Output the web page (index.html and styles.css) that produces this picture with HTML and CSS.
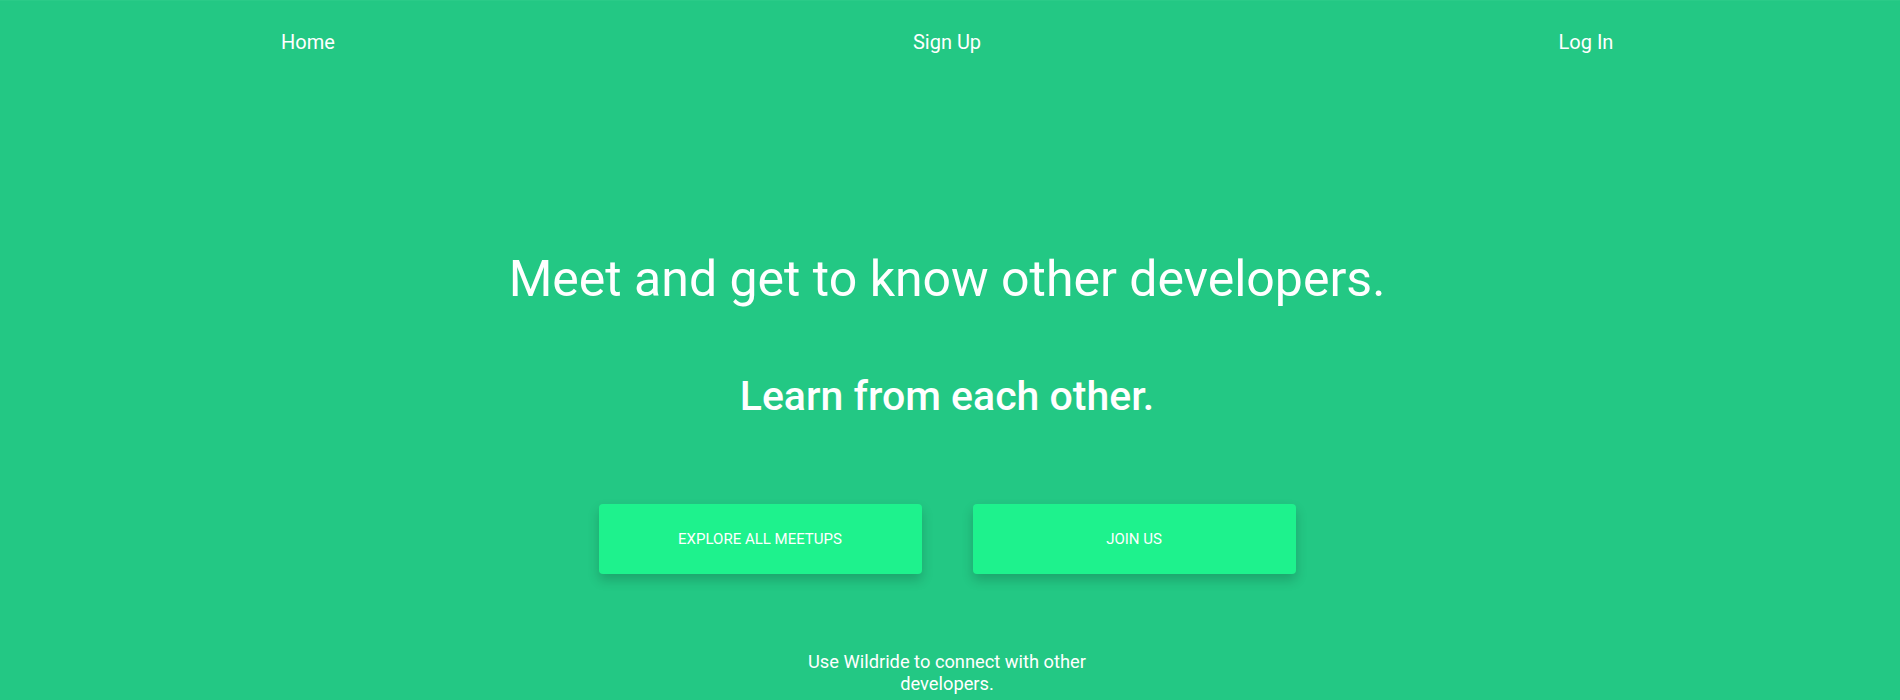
FILE: index.html
```html
<!DOCTYPE html>
<html lang="en">
<head>
<meta charset="utf-8">
<title>Wildride</title>
<link rel="stylesheet" href="styles.css">
</head>
<body>
<nav class="nav">
  <div class="nav-track">
    <a class="nav-link" href="#">Home</a>
    <a class="nav-link" href="#">Sign Up</a>
    <a class="nav-link" href="#">Log In</a>
  </div>
</nav>
<main class="hero">
  <h1 class="hero-title">Meet and get to know other developers.</h1>
  <h2 class="hero-sub">Learn from each other.</h2>
  <div class="actions">
    <a class="btn" href="#">Explore all meetups</a>
    <a class="btn" href="#">Join us</a>
  </div>
  <p class="blurb">Use Wildride to connect with other developers.</p>
</main>
</body>
</html>
```
FILE: styles.css
```css
html, body {
  margin: 0;
  padding: 0;
}
body {
  background: #23c884;
  border-top: 1px solid #2acb88;
  color: #ffffff;
  font-family: Roboto, "Liberation Sans", sans-serif;
  min-height: 700px;
  box-sizing: border-box;
  overflow-x: hidden;
}
.nav {
  padding: 29px 6px 0 0;
  overflow: hidden;
}
.nav-track {
  display: grid;
  grid-template-columns: repeat(3, 639px);
  justify-content: center;
  justify-items: center;
}
.nav-link {
  color: #ffffff;
  text-decoration: none;
  font-size: 20px;
  line-height: 24px;
}
.hero {
  display: flex;
  flex-direction: column;
  align-items: center;
  padding-right: 6px;
}
.hero-title {
  margin: 195px 0 0;
  font-size: 50px;
  line-height: 60px;
  font-weight: 400;
}
.hero-sub {
  margin: 62px 0 0;
  font-size: 41px;
  line-height: 50px;
  font-weight: 500;
}
.actions {
  display: flex;
  gap: 51px;
  margin-top: 83px;
}
.btn {
  width: 323px;
  height: 70px;
  display: flex;
  align-items: center;
  justify-content: center;
  background: #1ef28d;
  border-radius: 4px;
  color: #ffffff;
  text-decoration: none;
  text-transform: uppercase;
  font-size: 15px;
  box-shadow: 0 6px 12px rgba(0, 0, 0, 0.18);
}
.blurb {
  margin: 77px 0 0;
  width: 300px;
  text-align: center;
  font-size: 18.3px;
  line-height: 22px;
}
```
